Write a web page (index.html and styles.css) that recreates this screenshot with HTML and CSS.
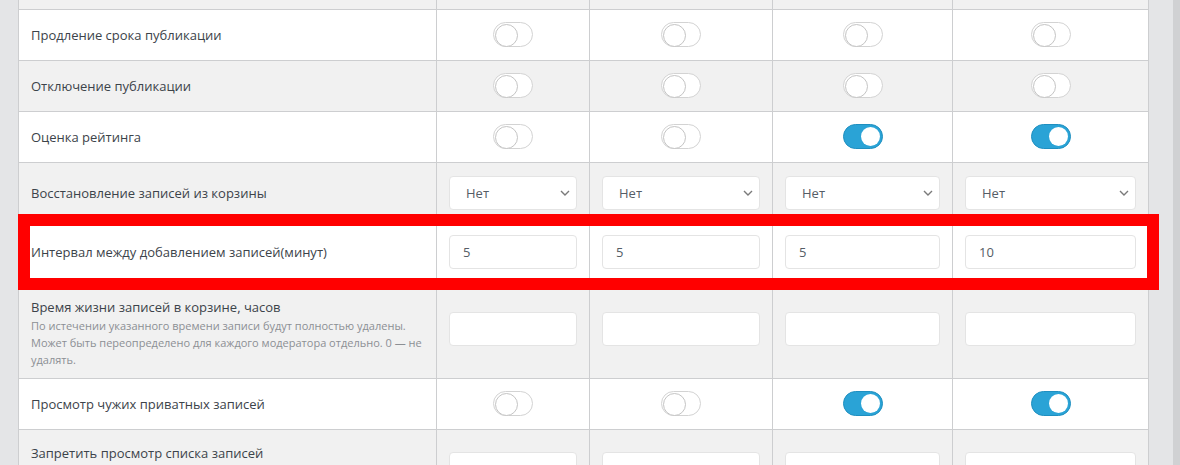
FILE: index.html
```html
<!DOCTYPE html>
<html lang="ru">
<head>
<meta charset="utf-8">
<title>Настройки</title>
<link rel="stylesheet" href="styles.css">
</head>
<body>
<div class="page">
  <div class="content">
    <table class="settings">
      <colgroup>
        <col class="c-label">
        <col class="c-1">
        <col class="c-2">
        <col class="c-3">
        <col class="c-4">
      </colgroup>
      <tbody>
        <tr class="odd top"><td></td><td></td><td></td><td></td><td></td></tr>
        <tr class="even">
          <td class="label">Продление срока публикации</td>
          <td class="ctl"><span class="toggle"></span></td>
          <td class="ctl"><span class="toggle"></span></td>
          <td class="ctl"><span class="toggle"></span></td>
          <td class="ctl"><span class="toggle"></span></td>
        </tr>
        <tr class="odd">
          <td class="label">Отключение публикации</td>
          <td class="ctl"><span class="toggle"></span></td>
          <td class="ctl"><span class="toggle"></span></td>
          <td class="ctl"><span class="toggle"></span></td>
          <td class="ctl"><span class="toggle"></span></td>
        </tr>
        <tr class="even">
          <td class="label">Оценка рейтинга</td>
          <td class="ctl"><span class="toggle"></span></td>
          <td class="ctl"><span class="toggle"></span></td>
          <td class="ctl"><span class="toggle on"></span></td>
          <td class="ctl"><span class="toggle on"></span></td>
        </tr>
        <tr class="odd sel">
          <td class="label">Восстановление записей из корзины</td>
          <td class="ctl"><div class="select"><select><option>Нет</option></select><svg class="chev" viewBox="0 0 10 6" width="10" height="6"><path d="M1 1l4 4 4-4" fill="none" stroke="#7a7a7a" stroke-width="1.4"/></svg></div></td>
          <td class="ctl"><div class="select"><select><option>Нет</option></select><svg class="chev" viewBox="0 0 10 6" width="10" height="6"><path d="M1 1l4 4 4-4" fill="none" stroke="#7a7a7a" stroke-width="1.4"/></svg></div></td>
          <td class="ctl"><div class="select"><select><option>Нет</option></select><svg class="chev" viewBox="0 0 10 6" width="10" height="6"><path d="M1 1l4 4 4-4" fill="none" stroke="#7a7a7a" stroke-width="1.4"/></svg></div></td>
          <td class="ctl"><div class="select"><select><option>Нет</option></select><svg class="chev" viewBox="0 0 10 6" width="10" height="6"><path d="M1 1l4 4 4-4" fill="none" stroke="#7a7a7a" stroke-width="1.4"/></svg></div></td>
        </tr>
        <tr class="even inp">
          <td class="label">Интервал между добавлением записей(минут)</td>
          <td class="ctl"><input class="field" type="text" value="5"></td>
          <td class="ctl"><input class="field" type="text" value="5"></td>
          <td class="ctl"><input class="field" type="text" value="5"></td>
          <td class="ctl"><input class="field" type="text" value="10"></td>
        </tr>
        <tr class="odd inp">
          <td class="label desc-cell">
            <div class="title">Время жизни записей в корзине, часов</div>
            <div class="desc">По истечении указанного времени записи будут полностью удалены. Может быть переопределено для каждого модератора отдельно. 0 — не удалять.</div>
          </td>
          <td class="ctl"><input class="field" type="text" value=""></td>
          <td class="ctl"><input class="field" type="text" value=""></td>
          <td class="ctl"><input class="field" type="text" value=""></td>
          <td class="ctl"><input class="field" type="text" value=""></td>
        </tr>
        <tr class="even">
          <td class="label">Просмотр чужих приватных записей</td>
          <td class="ctl"><span class="toggle"></span></td>
          <td class="ctl"><span class="toggle"></span></td>
          <td class="ctl"><span class="toggle on"></span></td>
          <td class="ctl"><span class="toggle on"></span></td>
        </tr>
        <tr class="odd inp">
          <td class="label tall-cell">
            <div class="title">Запретить просмотр списка записей</div>
          </td>
          <td class="ctl"><input class="field" type="text" value=""></td>
          <td class="ctl"><input class="field" type="text" value=""></td>
          <td class="ctl"><input class="field" type="text" value=""></td>
          <td class="ctl"><input class="field" type="text" value=""></td>
        </tr>
      </tbody>
    </table>
    <div class="highlight"></div>
  </div>
  <div class="scrollbar"></div>
</div>
</body>
</html>
```
FILE: styles.css
```css
* { box-sizing: border-box; }

html, body {
  margin: 0;
  padding: 0;
}

body {
  background: #e4e5e7;
  font-family: "Open Sans", "Noto Sans", sans-serif;
  font-size: 13px;
  color: #3c434a;
}

.page {
  display: flex;
  height: 465px;
  overflow: hidden;
}

.content {
  flex: 1;
  position: relative;
  padding: 0 24px 0 18px;
}

.scrollbar {
  width: 7px;
  background: #d0d1d3;
}

.settings {
  width: 1131px;
  table-layout: fixed;
  border-collapse: collapse;
}

.c-label { width: 418px; }
.c-1 { width: 153px; }
.c-2 { width: 183px; }
.c-3 { width: 180px; }
.c-4 { width: 196px; }

.settings td {
  border: 1px solid #cdced0;
  padding: 15px 12px;
  line-height: 20px;
  vertical-align: middle;
}

.settings tr.top td {
  border-top: none;
  padding: 0;
  height: 9px;
}

.settings tr.odd td { background: #f1f1f1; }
.settings tr.even td { background: #ffffff; }

.settings td.ctl {
  text-align: center;
  padding: 12px;
}

.settings tr.sel td.ctl { padding: 13px 12px; }
.settings tr.inp td.ctl { padding: 11px 12px 12px; }

.settings td.desc-cell { padding: 15px 12px 10px; }
.settings td.tall-cell { padding: 13px 12px 47px; }

.title {
  font-size: 13px;
  line-height: 20px;
  color: #3c434a;
}

.desc {
  font-size: 11px;
  line-height: 17px;
  color: #8c8f94;
}

.toggle {
  display: inline-block;
  position: relative;
  width: 40px;
  height: 25px;
  border: 1px solid #d3d3d3;
  border-radius: 13px;
  background: #fff;
  vertical-align: middle;
}

.toggle::after {
  content: "";
  position: absolute;
  left: 1px;
  top: 1px;
  width: 21px;
  height: 21px;
  border-radius: 50%;
  border: 1px solid #c4c4c4;
  background: #fff;
}

.toggle.on {
  background: #2aa3d6;
  border: 1px solid #1f8fc0;
}

.toggle.on::after {
  left: auto;
  right: 2px;
  top: 2px;
  width: 19px;
  height: 19px;
  border: none;
}

.select {
  position: relative;
}

.select select,
.field {
  display: block;
  width: 100%;
  height: 34px;
  margin: 0;
  border: 1px solid #e4e4e4;
  border-radius: 4px;
  background: #fff;
  font-family: "Open Sans", "Noto Sans", sans-serif;
  font-size: 13px;
  color: #555d66;
  outline: none;
}

.select select {
  appearance: none;
  -webkit-appearance: none;
  padding: 0 24px 0 16px;
}

.field {
  padding: 0 13px;
}

.chev {
  position: absolute;
  right: 7px;
  top: 14px;
  pointer-events: none;
}

.highlight {
  position: absolute;
  left: 18px;
  top: 214px;
  width: 1141px;
  height: 76px;
  border: 12px solid #ff0000;
  pointer-events: none;
}
```
